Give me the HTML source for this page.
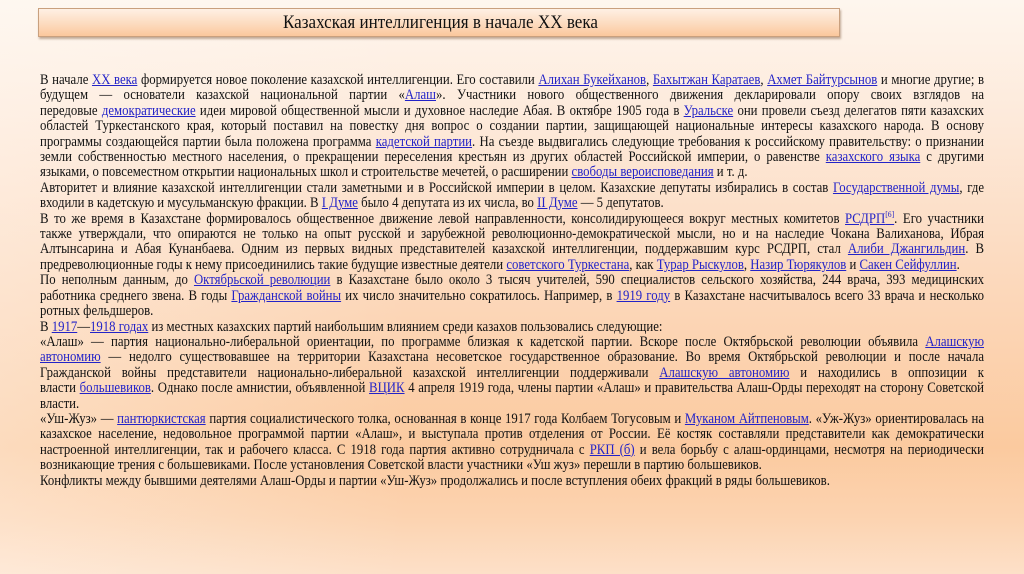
<!DOCTYPE html>
<html><head><meta charset="utf-8">
<style>
html,body{margin:0;padding:0}
body{width:1024px;height:574px;overflow:hidden;position:relative;
background:linear-gradient(180deg,#fef6ee 0%,#fdeadb 20%,#fcd8bb 50%,#fbca9f 78%,#fcd3b0 90%,#fde0c8 100%);
font-family:"Liberation Serif",serif;color:#111}
.ov{position:absolute;inset:0;background:linear-gradient(90deg,rgba(255,250,245,.35),rgba(255,250,245,0) 40%)}
.title{position:absolute;left:38px;top:8px;width:800px;height:27px;
background:linear-gradient(180deg,#fef0e4 0%,#fcd9bb 60%,#fbc79c 100%);
border:1px solid #c9a07e;box-shadow:1px 2px 2px rgba(120,80,50,.45)}
.title span{position:absolute;left:244px;top:4px;font-size:17px;white-space:nowrap;color:#111;transform-origin:left top}
#txt{position:absolute;left:40px;top:73px;transform-origin:left top}
.l{height:15.42px;line-height:15.42px;white-space:nowrap;text-align:justify;text-align-last:justify}
.e{text-align:left;text-align-last:left}
a{color:#2323c8;text-decoration:underline}
sup{font-size:.6em;line-height:0}
</style></head><body>
<div class="ov"></div>
<div class="title"><span id="tt">Казахская интеллигенция в начале XX века</span></div>
<div id="txt">
<div class="l">В начале <a>XX века</a> формируется новое поколение казахской интеллигенции. Его составили <a>Алихан Букейханов</a>, <a>Бахытжан Каратаев</a>, <a>Ахмет Байтурсынов</a> и многие другие; в</div>
<div class="l">будущем — основатели казахской национальной партии «<a>Алаш</a>». Участники нового общественного движения декларировали опору своих взглядов на</div>
<div class="l">передовые <a>демократические</a> идеи мировой общественной мысли и духовное наследие Абая. В октябре 1905 года в <a>Уральске</a> они провели съезд делегатов пяти казахских</div>
<div class="l">областей Туркестанского края, который поставил на повестку дня вопрос о создании партии, защищающей национальные интересы казахского народа. В основу</div>
<div class="l">программы создающейся партии была положена программа <a>кадетской партии</a>. На съезде выдвигались следующие требования к российскому правительству: о признании</div>
<div class="l">земли собственностью местного населения, о прекращении переселения крестьян из других областей Российской империи, о равенстве <a>казахского языка</a> с другими</div>
<div class="l e">языками, о повсеместном открытии национальных школ и строительстве мечетей, о расширении <a>свободы вероисповедания</a> и т. д.</div>
<div class="l">Авторитет и влияние казахской интеллигенции стали заметными и в Российской империи в целом. Казахские депутаты избирались в состав <a>Государственной думы</a>, где</div>
<div class="l e">входили в кадетскую и мусульманскую фракции. В <a>I Думе</a> было 4 депутата из их числа, во <a>II Думе</a> — 5 депутатов.</div>
<div class="l">В то же время в Казахстане формировалось общественное движение левой направленности, консолидирующееся вокруг местных комитетов <a>РСДРП<sup>[6]</sup></a>. Его участники</div>
<div class="l">также утверждали, что опираются не только на опыт русской и зарубежной революционно-демократической мысли, но и на наследие Чокана Валиханова, Ибрая</div>
<div class="l">Алтынсарина и Абая Кунанбаева. Одним из первых видных представителей казахской интеллигенции, поддержавшим курс РСДРП, стал <a>Алиби Джангильдин</a>. В</div>
<div class="l e">предреволюционные годы к нему присоединились такие будущие известные деятели <a>советского Туркестана</a>, как <a>Турар Рыскулов</a>, <a>Назир Тюрякулов</a> и <a>Сакен Сейфуллин</a>.</div>
<div class="l">По неполным данным, до <a>Октябрьской революции</a> в Казахстане было около 3 тысяч учителей, 590 специалистов сельского хозяйства, 244 врача, 393 медицинских</div>
<div class="l">работника среднего звена. В годы <a>Гражданской войны</a> их число значительно сократилось. Например, в <a>1919 году</a> в Казахстане насчитывалось всего 33 врача и несколько</div>
<div class="l e">ротных фельдшеров.</div>
<div class="l e">В <a>1917</a>—<a>1918 годах</a> из местных казахских партий наибольшим влиянием среди казахов пользовались следующие:</div>
<div class="l">«Алаш» — партия национально-либеральной ориентации, по программе близкая к кадетской партии. Вскоре после Октябрьской революции объявила <a>Алашскую</a></div>
<div class="l"><a>автономию</a> — недолго существовавшее на территории Казахстана несоветское государственное образование. Во время Октябрьской революции и после начала</div>
<div class="l">Гражданской войны представители национально-либеральной казахской интеллигенции поддерживали <a>Алашскую автономию</a> и находились в оппозиции к</div>
<div class="l">власти <a>большевиков</a>. Однако после амнистии, объявленной <a>ВЦИК</a> 4 апреля 1919 года, члены партии «Алаш» и правительства Алаш-Орды переходят на сторону Советской</div>
<div class="l e">власти.</div>
<div class="l">«Уш-Жуз» — <a>пантюркистская</a> партия социалистического толка, основанная в конце 1917 года Колбаем Тогусовым и <a>Муканом Айтпеновым</a>. «Уж-Жуз» ориентировалась на</div>
<div class="l">казахское население, недовольное программой партии «Алаш», и выступала против отделения от России. Её костяк составляли представители как демократически</div>
<div class="l">настроенной интеллигенции, так и рабочего класса. С 1918 года партия активно сотрудничала с <a>РКП (б)</a> и вела борьбу с алаш-ординцами, несмотря на периодически</div>
<div class="l e">возникающие трения с большевиками. После установления Советской власти участники «Уш жуз» перешли в партию большевиков.</div>
<div class="l e" id="last">Конфликты между бывшими деятелями Алаш-Орды и партии «Уш-Жуз» продолжались и после вступления обеих фракций в ряды большевиков.</div>
</div>
<script>
(function(){
  var K=1.15, W=944*K;
  var txt=document.getElementById('txt');
  txt.style.width=W+'px';
  txt.style.transform='scaleX('+(1/K)+')';
  var lines=txt.querySelectorAll('.l');
  function natural(el){
    var s=document.createElement('span');s.style.whiteSpace='nowrap';
    s.innerHTML=el.innerHTML;el.innerHTML='';el.appendChild(s);
    var w=s.getBoundingClientRect().width;el.innerHTML=s.innerHTML;return w;
  }
  var fs=14;txt.style.fontSize=fs+'px';
  var w=natural(document.getElementById('last'));
  var nfs=fs*791/w;
  txt.style.fontSize=nfs+'px';
  var mx=0;
  for(var i=0;i<lines.length;i++){var ww=natural(lines[i]);if(ww>mx)mx=ww;}
  if(mx*K>944*K-1 && mx>W){nfs=nfs*(W-1)/mx;txt.style.fontSize=nfs+'px';}
  var t=document.getElementById('tt');
  t.style.fontSize='19px';
  t.style.transform='scaleX(1)';
  var tw=t.getBoundingClientRect().width;
  t.style.transform='scaleX('+(315/tw)+')';
  t.style.top='3px';
})();
</script>
</body></html>
